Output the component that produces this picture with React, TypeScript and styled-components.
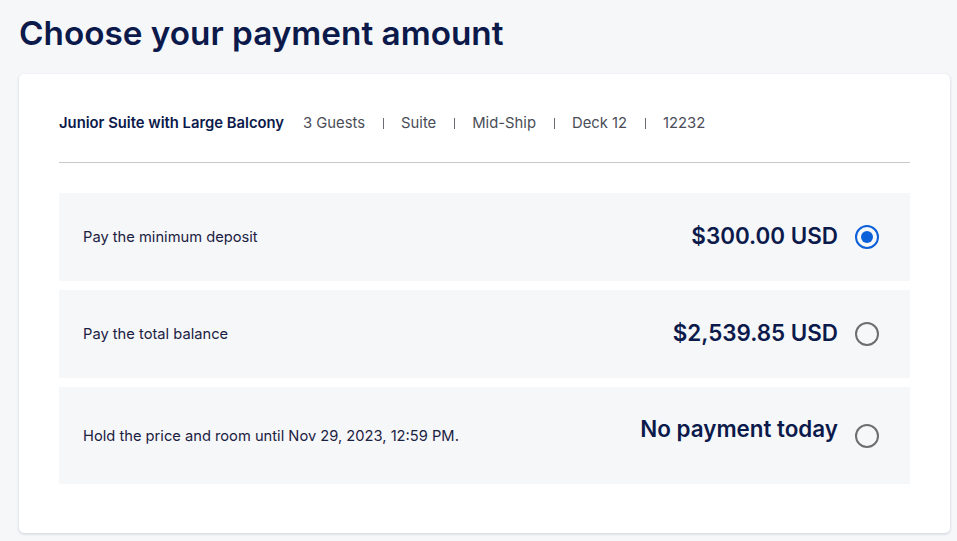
import { ReactElement, useState } from "react";
import styled, { createGlobalStyle } from "styled-components";

const GlobalStyle = createGlobalStyle`
  html, body {
    margin: 0;
    padding: 0;
    background: #f6f7f9;
  }
  body {
    font-family: "Inter", "Liberation Sans", sans-serif;
    color: #0c1a4b;
  }
`;

const Page = styled.div`
  width: 957px;
  height: 541px;
  padding: 13px 7px 0 19px;
  box-sizing: border-box;
  overflow: hidden;
`;

const Title = styled.h1`
  margin: 0 0 20px;
  font-size: 33.3px;
  line-height: 41px;
  font-weight: 600;
  color: #0c1a4b;
`;

const Card = styled.section`
  background: #fff;
  border-radius: 5px;
  box-shadow: 0 1px 3px rgba(20, 30, 60, 0.18);
  padding: 40px 40px 49px;
`;

const RoomInfo = styled.div`
  display: flex;
  align-items: center;
  font-size: 14.8px;
  line-height: 18px;
  color: #4a4d57;
  padding-bottom: 30px;
  border-bottom: 1px solid #c9c9cc;
  margin-bottom: 30px;

  & > strong {
    font-weight: 600;
    color: #0c1a4b;
    margin-right: 19px;
  }
`;

const Sep = styled.span`
  display: inline-block;
  width: 1px;
  height: 11px;
  margin: 0 17px 0 18px;
  background: #6a6c74;
  vertical-align: -1px;
`;

const Options = styled.div`
  display: flex;
  flex-direction: column;
  gap: 9px;
`;

const Option = styled.label<{ $tall?: boolean }>`
  display: flex;
  align-items: center;
  justify-content: space-between;
  background: #f6f7f9;
  height: ${(p) => (p.$tall ? "97px" : "88px")};
  padding: 0 31px 0 24px;
  box-sizing: border-box;
  cursor: pointer;
`;

const OptionLabel = styled.span`
  font-size: 14.7px;
  color: #1b2142;
`;

const OptionRight = styled.span<{ $tall?: boolean }>`
  display: flex;
  align-items: center;
  gap: 17px;

  & > b {
    font-size: 22.4px;
    font-weight: 600;
    color: #0c1a4b;
    position: relative;
    top: ${(p) => (p.$tall ? "-7px" : "-2px")};
  }
`;

const Radio = styled.span<{ $on: boolean }>`
  width: 24px;
  height: 24px;
  box-sizing: border-box;
  border-radius: 50%;
  border: 2px solid ${(p) => (p.$on ? "#0b5fd9" : "#6e6e6e")};
  display: flex;
  align-items: center;
  justify-content: center;

  &::after {
    content: "";
    width: 12px;
    height: 12px;
    border-radius: 50%;
    background: ${(p) => (p.$on ? "#0b5fd9" : "transparent")};
  }
`;

const options = [
  { label: "Pay the minimum deposit", amount: "$300.00 USD" },
  { label: "Pay the total balance", amount: "$2,539.85 USD" },
  { label: "Hold the price and room until Nov 29, 2023, 12:59 PM.", amount: "No payment today", tall: true },
];

export default function App(): ReactElement {
  const [selected, setSelected] = useState(0);
  const details = ["3 Guests", "Suite", "Mid-Ship", "Deck 12", "12232"];

  return (
    <Page>
      <GlobalStyle />
      <Title>Choose your payment amount</Title>
      <Card>
        <RoomInfo>
          <strong>Junior Suite with Large Balcony</strong>
          {details.map((d, i) => (
            <span key={d}>
              {i > 0 && <Sep />}
              {d}
            </span>
          ))}
        </RoomInfo>
        <Options>
          {options.map((o, i) => (
            <Option key={o.label} $tall={o.tall} onClick={() => setSelected(i)}>
              <OptionLabel>{o.label}</OptionLabel>
              <OptionRight $tall={o.tall}>
                <b>{o.amount}</b>
                <Radio $on={selected === i} />
              </OptionRight>
            </Option>
          ))}
        </Options>
      </Card>
    </Page>
  );
}
